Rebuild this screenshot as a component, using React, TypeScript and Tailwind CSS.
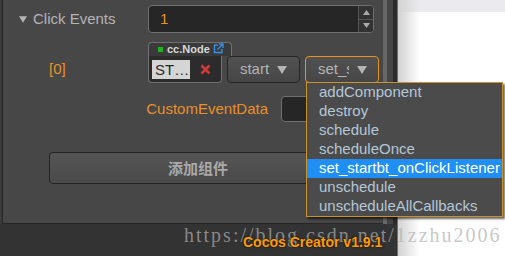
const methods = [
  "addComponent",
  "destroy",
  "schedule",
  "scheduleOnce",
  "set_startbt_onClickListener",
  "unschedule",
  "unscheduleAllCallbacks",
];

function Caret({ className = "" }: { className?: string }) {
  return (
    <svg width="10" height="8" viewBox="0 0 10 8" className={className}>
      <path d="M0 0h10L5 8z" fill="currentColor" />
    </svg>
  );
}

function LinkIcon() {
  return (
    <svg width="11" height="11" viewBox="0 0 11 11" fill="none" stroke="#3b8fe0" strokeWidth="1.4">
      <path d="M5 2H1.5v7.5H9V6" />
      <path d="M6 1h4v4M10 1L4.5 6.5" />
    </svg>
  );
}

export default function App() {
  return (
    <div className="relative w-[505px] h-[256px] overflow-hidden bg-[#333333] font-['Liberation_Sans',Arial,sans-serif]">
      <div className="flex h-full">
        <div className="w-[397px] flex flex-col">
          <div className="h-[224px] flex bg-[#3a3a3a] pl-[2px]">
            <div className="w-[381px] h-full bg-[#474747] border-l border-b border-[#262626] pt-[5px]">
              {/* Click Events */}
              <div className="flex items-center h-[28px]">
                <div className="w-[145px] pl-[16px] flex items-center gap-[6px] text-[#b4b4b4] text-[15px]">
                  <Caret className="w-[8px] h-[7px]" />
                  <span>Click Events</span>
                </div>
                <div className="w-[226px] h-[28px] flex rounded-[4px] border border-[#707070] bg-[#262626] overflow-hidden">
                  <div className="flex-1 pl-[11px] flex items-center text-[#e8902a] text-[15px]">1</div>
                  <div className="w-[15px] flex flex-col border-l border-[#555] bg-[#333]">
                    <div className="flex-1 flex items-center justify-center border-b border-[#555] text-[#aaa]">
                      <svg width="7" height="5" viewBox="0 0 7 5"><path d="M0 5h7L3.5 0z" fill="currentColor" /></svg>
                    </div>
                    <div className="flex-1 flex items-center justify-center text-[#aaa]">
                      <svg width="7" height="5" viewBox="0 0 7 5"><path d="M0 0h7L3.5 5z" fill="currentColor" /></svg>
                    </div>
                  </div>
                </div>
              </div>

              {/* [0] row */}
              <div className="flex items-end mt-[9px]">
                <div className="w-[145px] pl-[46px] h-[27px] flex items-center text-[#e8902a] text-[15px]">[0]</div>
                <div className="w-[74px] flex flex-col">
                  <div className="w-[84px] h-[14px] flex items-center pl-[9px] border-t border-l border-r border-[#707070] rounded-t-[4px] bg-[#3a3a3a]">
                    <span className="w-[5px] h-[5px] bg-[#1eb41e] mr-[4px]" />
                    <span className="text-[11px] font-bold text-[#d8d8d8] leading-none">cc.Node</span>
                    <span className="ml-[3px] -mt-[2px]"><LinkIcon /></span>
                  </div>
                  <div className="w-[74px] h-[27px] flex items-center pl-[3px] border-l border-r border-b border-[#707070] rounded-b-[4px] bg-[#2c2c2c]">
                    <div className="w-[38px] h-[19px] bg-[#d5d5d5] text-[#2a2a2a] text-[15px] leading-[19px] pl-[3px]">ST…</div>
                    <svg width="11" height="11" viewBox="0 0 11 11" className="ml-[10px]">
                      <path d="M1.5 1.5l8 8M9.5 1.5l-8 8" stroke="#d0393b" strokeWidth="2.6" />
                    </svg>
                  </div>
                </div>
                <div className="ml-[5px] w-[73px] h-[27px] rounded-[4px] border border-[#252525] bg-gradient-to-b from-[#515151] to-[#464646] flex items-center justify-center gap-[8px] text-[#b4b4b4] text-[15px]">
                  <span>start</span>
                  <Caret />
                </div>
                <div className="ml-[5px] w-[74px] h-[27px] rounded-[4px] border border-[#e8921e] bg-gradient-to-b from-[#515151] to-[#464646] flex items-center pl-[12px] gap-[8px] text-[#b4b4b4] text-[15px]">
                  <span className="w-[31px] overflow-hidden whitespace-nowrap">set_s</span>
                  <Caret />
                </div>
              </div>

              {/* CustomEventData */}
              <div className="flex items-center h-[26px] mt-[13px]">
                <div className="w-[278px] text-right pr-[13px] text-[#e8902a] text-[15px]">CustomEventData</div>
                <div className="w-[100px] h-[26px] rounded-[4px] border border-[#707070] bg-[#262626]" />
              </div>

              {/* add component */}
              <div className="mt-[30px] ml-[46px] w-[298px] h-[32px] rounded-[4px] border border-[#232323] bg-gradient-to-b from-[#555555] to-[#4a4a4a] flex items-center justify-center text-[#a9a9a9] text-[15px] font-bold font-['Noto_Sans_CJK_SC',sans-serif]">
                添加组件
              </div>
            </div>
            <div className="w-[4px] bg-[#676767]" />
            <div className="w-[6px] bg-[#454545]" />
            <div className="w-[4px] bg-[#2b2b2b]" />
          </div>
          <div className="flex-1 bg-[#333333]" />
        </div>
        <div className="w-[1px] bg-[#2f7fd0]" />
        <div className="relative flex-1 flex flex-col bg-white">
          <div className="h-[12px] bg-[#ebebef]" />
          <div className="absolute left-0 top-0 bottom-0 w-[22px] bg-gradient-to-r from-[#d2d2d2] to-white/0" />
        </div>
      </div>

      {/* dropdown */}
      <div className="absolute left-[306px] top-[82px] w-[197px] border border-[#c8922c] bg-[#4b4b4b] shadow-[2px_2px_2px_rgba(0,0,0,0.6)]">
        {methods.map((m) => (
          <div
            key={m}
            className={
              m === "set_startbt_onClickListener"
                ? "h-[19px] pl-[12px] flex items-center text-[15px] whitespace-nowrap bg-[#1f8ff5] text-white"
                : "h-[19px] pl-[12px] flex items-center text-[15px] whitespace-nowrap text-[#b3c7d8]"
            }
          >
            {m}
          </div>
        ))}
      </div>

      {/* watermark */}
      <div className="absolute left-[184px] top-[225px] text-[20px] leading-[20px] tracking-[2px] font-['Liberation_Serif',serif] text-[rgba(175,175,175,0.7)] whitespace-nowrap">
        https://blog.csdn.net/1zzhu2006
      </div>
      <div className="absolute left-[243px] top-[234px] text-[14px] leading-[16px] font-bold font-['Liberation_Sans',sans-serif] text-[#ff9c00] whitespace-nowrap [text-shadow:0_0_2px_#000]">
        Cocos Creator v1.9.1
      </div>
    </div>
  );
}
